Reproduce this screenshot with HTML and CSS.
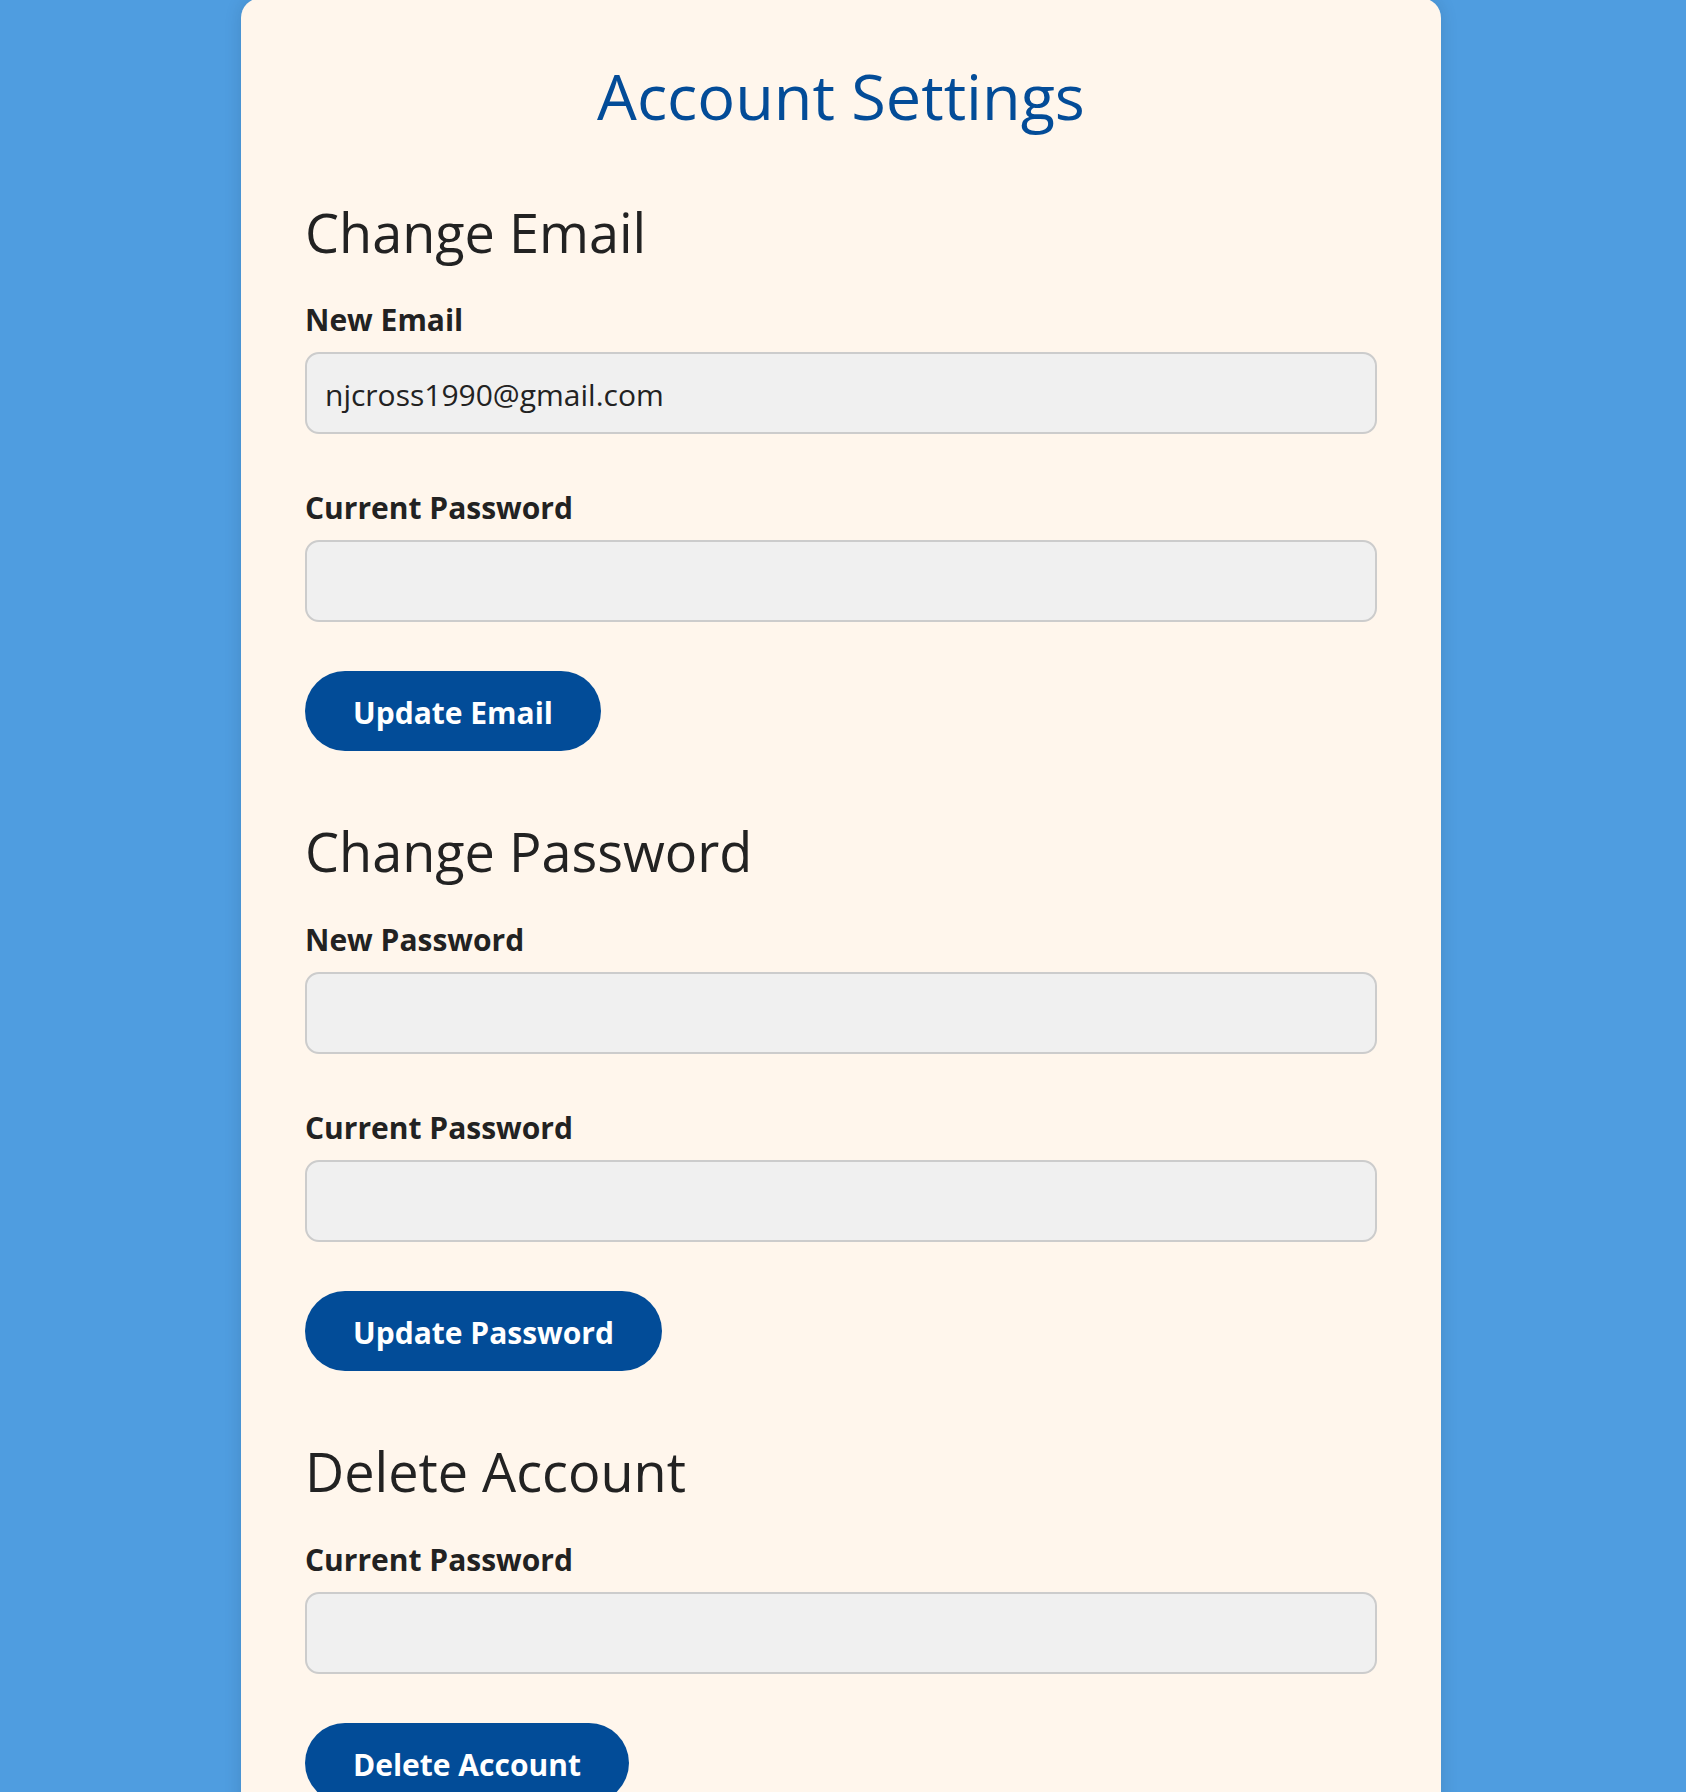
FILE: index.html
```html
<!DOCTYPE html>
<html lang="en">
<head>
<meta charset="utf-8">
<title>Account Settings</title>
<link rel="stylesheet" href="styles.css">
</head>
<body>
<main class="card">
  <h1 class="title">Account Settings</h1>

  <section class="section">
    <h2 class="section-title">Change Email</h2>
    <div class="field">
      <label class="label" for="new-email">New Email</label>
      <input class="input" id="new-email" type="email" value="njcross1990@gmail.com">
    </div>
    <div class="field">
      <label class="label" for="email-pass">Current Password</label>
      <input class="input" id="email-pass" type="password">
    </div>
    <button class="btn" type="button">Update Email</button>
  </section>

  <section class="section">
    <h2 class="section-title">Change Password</h2>
    <div class="field">
      <label class="label" for="new-pass">New Password</label>
      <input class="input" id="new-pass" type="password">
    </div>
    <div class="field">
      <label class="label" for="pass-pass">Current Password</label>
      <input class="input" id="pass-pass" type="password">
    </div>
    <button class="btn" type="button">Update Password</button>
  </section>

  <section class="section">
    <h2 class="section-title">Delete Account</h2>
    <div class="field">
      <label class="label" for="del-pass">Current Password</label>
      <input class="input" id="del-pass" type="password">
    </div>
    <button class="btn" type="button">Delete Account</button>
  </section>
</main>
</body>
</html>
```
FILE: styles.css
```css
html, body {
  margin: 0;
  padding: 0;
}

body {
  padding-right: 4px;
  background: #4f9de0;
  font-family: "Open Sans", "Noto Sans", "Liberation Sans", sans-serif;
  color: #222222;
}

.card {
  box-sizing: border-box;
  width: 1200px;
  margin: -2px auto 0;
  padding: 60px 64px 60px;
  background: #fff6ec;
  border-radius: 20px;
  box-shadow: 0 0 18px rgba(0, 0, 0, 0.12);
}

.title {
  margin: 0 0 66px;
  font-size: 63px;
  line-height: 1.2;
  font-weight: 500;
  color: #034c98;
  text-align: center;
}

.section + .section {
  margin-top: 68px;
}

.section-title {
  margin: 0 0 38px;
  font-size: 54px;
  line-height: 1.2;
  font-weight: 500;
  color: #222222;
}

.field + .field {
  margin-top: 56px;
}

.label {
  display: block;
  margin-bottom: 14px;
  font-size: 30px;
  line-height: 36px;
  font-weight: 700;
  color: #222222;
}

.input {
  display: block;
  box-sizing: border-box;
  width: 100%;
  height: 82px;
  margin: 0;
  padding: 2px 18px 0;
  background: #f0f0f0;
  border: 2px solid #cccccc;
  border-radius: 14px;
  font-family: inherit;
  font-size: 30px;
  color: #222222;
  outline: none;
}

.btn {
  display: block;
  box-sizing: border-box;
  height: 80px;
  margin-top: 49px;
  padding: 3px 48px 0;
  border: none;
  border-radius: 40px;
  background: #024c98;
  color: #ffffff;
  font-family: inherit;
  font-size: 30px;
  font-weight: 700;
  line-height: 77px;
  cursor: pointer;
}
```
